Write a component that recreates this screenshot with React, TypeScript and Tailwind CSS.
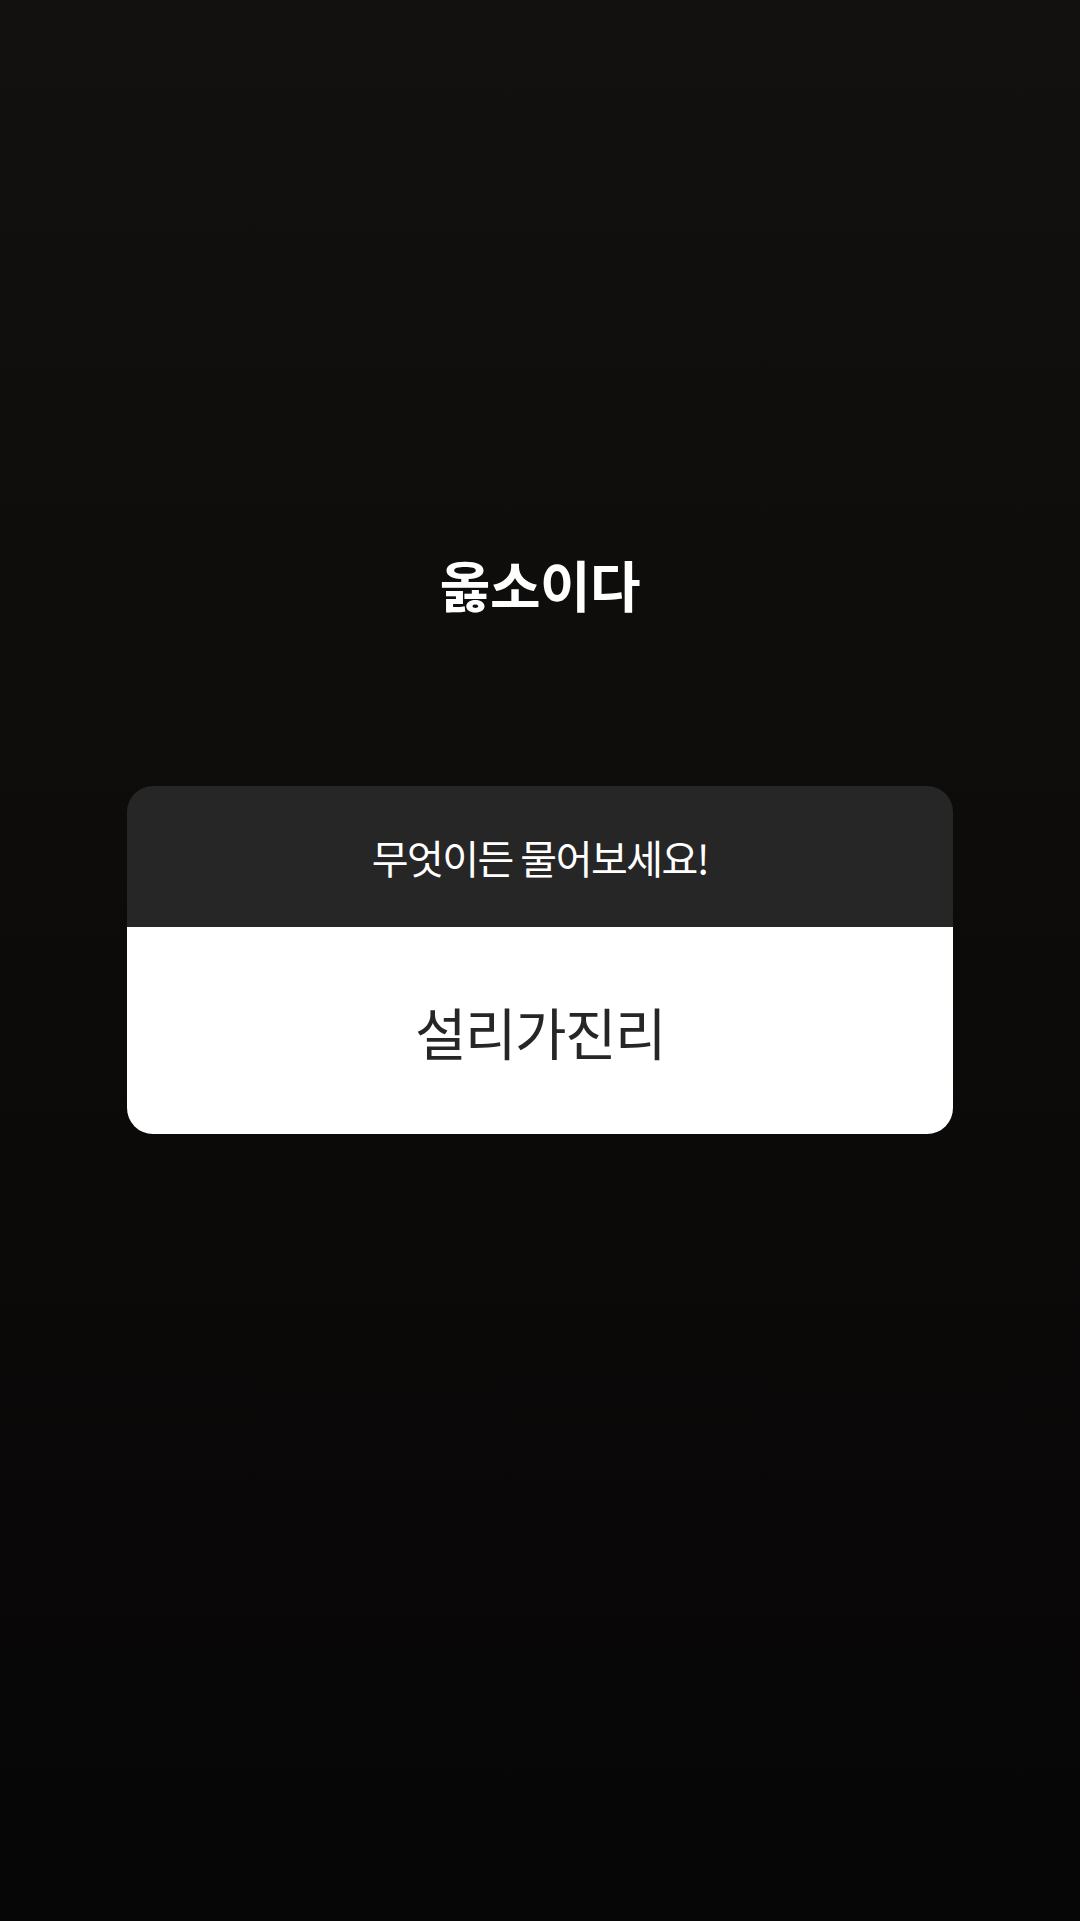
const font = { fontFamily: '"Noto Sans CJK KR", "Noto Sans", sans-serif' }

const QuestionCard = ({ question, answer }: { question: string; answer: string }) => (
  <div className="w-[826px] overflow-hidden rounded-[26px]">
    <div className="flex h-[141px] items-center justify-center bg-[#262626]">
      <span className="text-[40px] leading-none tracking-[-1.5px] text-white">
        {question}
      </span>
    </div>
    <div className="flex h-[207px] items-center justify-center bg-white">
      <span className="text-[56px] leading-none tracking-[-1.5px] text-[#262626]">
        {answer}
      </span>
    </div>
  </div>
)

const App = () => {
  return (
    <div
      className="flex h-[1921px] w-[1080px] flex-col items-center bg-gradient-to-b from-[#13110f] via-[#0d0b0a] to-[#070606]"
      style={font}
    >
      <div className="mt-[554px] flex h-[58px] items-center">
        <span className="text-[55px] font-bold leading-none tracking-[-0.5px] text-white">
          옳소이다
        </span>
      </div>
      <div className="mt-[174px]">
        <QuestionCard question="무엇이든 물어보세요!" answer="설리가진리" />
      </div>
    </div>
  )
}

export default App
